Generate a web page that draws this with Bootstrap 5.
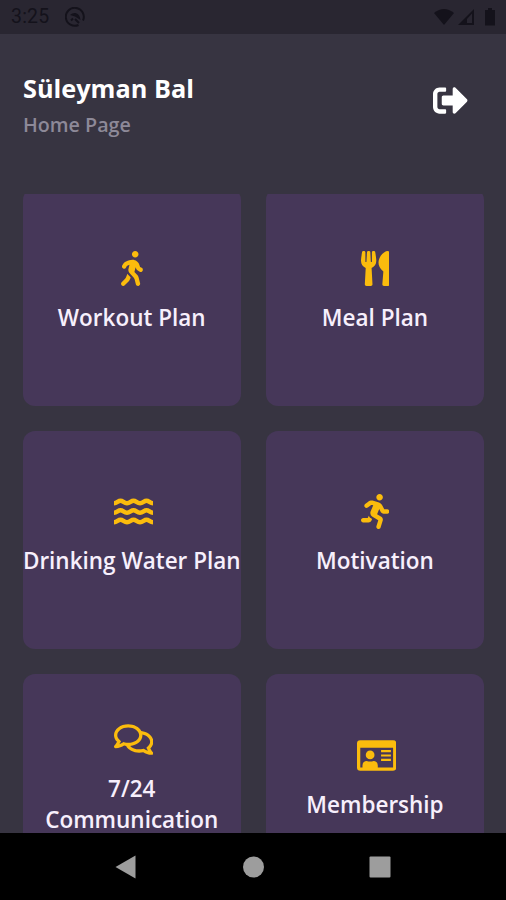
<!DOCTYPE html>
<html lang="en">
<head>
<meta charset="utf-8">
<meta name="viewport" content="width=device-width, initial-scale=1">
<title>Home Page</title>
<link href="https://cdn.jsdelivr.net/npm/bootstrap@5.3.0/dist/css/bootstrap.min.css" rel="stylesheet">
<style>
body{background:#373441;font-family:"Open Sans","Noto Sans",sans-serif;height:900px}
.status-bar{height:34px;background:#292631;color:#14121b;font:19.500px/36px Roboto,sans-serif;padding:0 10px 0 11px;letter-spacing:.2px}
.page-head{height:160px;padding:37px 38px 0 23px}
.user-name{font-size:25.300px;font-weight:700;line-height:34px;margin:0}
.page-name{font-size:19.700px;font-weight:600;line-height:30px;color:#8d8998;margin-top:5px}
.exit-btn{margin-top:12px;line-height:0}
.plan-scroll{height:639px}
.plan-grid{display:grid;grid-template-columns:217.500px 217.500px;grid-auto-rows:217.500px;gap:25.700px;padding-left:23px;margin-top:-6px}
.plan-card{background:#463759;border:0;border-radius:12px;color:#f7effc;padding-bottom:9px}
.plan-card svg{height:35px;fill:#fbbc0d;margin-bottom:16px}
.plan-card .wide-icon{margin-left:3px}
.plan-title{font-size:22.500px;font-weight:600;line-height:31px;white-space:nowrap}
.system-nav{height:67px;background:#000}
</style>
</head>
<body class="d-flex flex-column overflow-hidden">
<div class="status-bar d-flex justify-content-between flex-shrink-0">
  <div class="d-flex align-items-center">
    <span>3:25</span>
    <svg class="ms-3" width="20" height="20" viewBox="0 0 20 20" fill="none" stroke="#14121b" stroke-width="2"><path d="M13.500 18A9 9 0 1 1 18 13.500"/><path d="M5 8C9 4 15 6 15.500 13L10 9.500Z" fill="#14121b" stroke="none"/><path d="M6 13.500L8 11.500M10 12l4 4"/></svg>
  </div>
  <svg width="64" height="34" viewBox="0 0 64 34" fill="#14121b"><path d="M2 13Q12 5 22 13L12 25Z"/><path fill-rule="evenodd" d="M26 25L42 9V25ZM35 19V23H40V13.500Z"/><path d="M53 10h3V8h4v2h3v15.500H53Z"/></svg>
</div>
<header class="page-head d-flex justify-content-between flex-shrink-0">
  <div><h1 class="user-name text-white">Süleyman Bal</h1><div class="page-name">Home Page</div></div>
  <a href="#" class="exit-btn" aria-label="Sign out"><svg width="35" height="35" viewBox="0 0 512 512" fill="#fff"><path d="M497 273L329 441c-15 15-41 4.500-41-17v-96H152c-13.300 0-24-10.700-24-24v-96c0-13.300 10.700-24 24-24h136V88c0-21.400 25.900-32 41-17l168 168c9.300 9.400 9.300 24.600 0 34zM192 436v-40c0-6.600-5.400-12-12-12H96c-17.700 0-32-14.300-32-32V160c0-17.700 14.300-32 32-32h84c6.600 0 12-5.400 12-12V76c0-6.600-5.400-12-12-12H96c-53 0-96 43-96 96v192c0 53 43 96 96 96h84c6.600 0 12-5.400 12-12z"/></svg></a>
</header>
<main class="plan-scroll overflow-hidden flex-shrink-0 d-flex">
  <div class="plan-grid">
    <div class="card plan-card align-items-center justify-content-center text-center">
      <svg viewBox="0 0 320 512"><path d="M208 96c26.500 0 48-21.500 48-48S234.500 0 208 0s-48 21.500-48 48 21.500 48 48 48zm94.500 149.100l-23.300-11.800-9.700-29.400c-14.700-44.600-55.700-75.800-102.200-75.900-36-.1-55.900 10.100-93.300 25.200-21.600 8.700-39.300 25.200-49.700 46.200L17.600 213c-7.800 15.800-1.500 35 14.200 42.900 15.600 7.900 34.600 1.500 42.500-14.300L81 228c3.500-7 9.300-12.500 16.500-15.400l26.800-10.800-15.200 60.700c-5.200 20.800.4 42.900 14.900 58.800l59.900 65.400c7.200 7.900 12.300 17.400 14.900 27.700l18.300 73.300c4.300 17.100 21.700 27.600 38.800 23.300 17.100-4.300 27.600-21.700 23.300-38.800l-22.200-89c-2.600-10.300-7.700-19.900-14.900-27.700l-45.500-49.700 17.200-68.700 5.500 16.500c5.300 16.100 16.700 29.400 31.700 37l23.300 11.800c15.600 7.900 34.600 1.500 42.500-14.300 7.700-15.700 1.400-35.100-14.300-43zM73.600 385.800c-3.200 8.100-8 15.400-14.200 21.500l-50 50.100c-12.500 12.500-12.500 32.800 0 45.300s32.700 12.500 45.200 0l59.400-59.400c6.100-6.100 10.900-13.400 14.200-21.500l13.500-33.800c-55.300-60.300-38.700-41.800-47.400-53.700l-20.700 51.500z"/></svg>
      <div class="plan-title">Workout Plan</div>
    </div>
    <div class="card plan-card align-items-center justify-content-center text-center">
      <svg viewBox="0 0 416 512"><path d="M207.900 15.200c.8 4.700 16.100 94.500 16.100 128.800 0 52.300-27.800 89.600-68.900 104.600L168 486.700c.7 13.700-10.200 25.300-24 25.300H80c-13.700 0-24.700-11.500-24-25.300l12.900-238.100C27.700 233.600 0 196.200 0 144 0 109.600 15.300 19.900 16.100 15.200 19.300-5.100 61.400-5.400 64 16.300v141.200c1.300 3.400 15.100 3.200 16 0 1.400-25.300 7.900-139.200 8-141.800 3.300-20.800 44.700-20.800 47.900 0 .2 2.700 6.600 116.500 8 141.800.9 3.200 14.800 3.400 16 0V16.300c2.600-21.600 44.800-21.400 47.900-1.100zm119.200 285.700l-15 185.100c-1.200 14 9.900 26 23.900 26h56c13.300 0 24-10.700 24-24V24c0-13.200-10.700-24-24-24-82.500 0-221.400 178.500-64.900 300.900z"/></svg>
      <div class="plan-title">Meal Plan</div>
    </div>
    <div class="card plan-card align-items-center justify-content-center text-center">
      <svg class="wide-icon" viewBox="0 0 39 35"><g fill="none" stroke="#fbbc0d" stroke-width="4.600"><path id="wave" d="M0 9.200C3 9.200 4 6.800 6.500 6.800S10 9.200 13 9.200S17 6.800 19.500 6.800S23 9.200 26 9.200S30 6.800 32.500 6.800S36 9.200 39 9.200"/><use href="#wave" y="9.500"/><use href="#wave" y="19"/></g></svg>
      <div class="plan-title">Drinking Water Plan</div>
    </div>
    <div class="card plan-card align-items-center justify-content-center text-center">
      <svg viewBox="0 0 416 512"><path d="M272 96c26.510 0 48-21.490 48-48S298.510 0 272 0s-48 21.490-48 48 21.490 48 48 48zM113.690 317.470l-14.800 34.520H32c-17.670 0-32 14.330-32 32s14.330 32 32 32h77.450c19.250 0 36.580-11.440 44.110-29.090l8.790-20.520-10.670-6.300c-17.320-10.230-30.060-25.370-37.990-42.610zM384 223.990h-44.030l-26.060-53.250c-12.500-25.550-35.450-44.230-61.780-50.940l-71.080-21.140c-28.300-6.800-57.770-.55-80.840 17.140l-39.670 30.410c-14.030 10.750-16.690 30.830-5.940 44.860s30.840 16.660 44.860 5.910l39.690-30.410c7.670-5.890 17.440-8 25.270-6.140l14.700 4.370-37.460 87.390c-12.620 29.480-1.310 64.010 26.300 80.310l84.980 50.170-27.470 87.730c-5.280 16.860 4.110 34.820 20.970 40.090 3.190 1 6.410 1.480 9.580 1.480 13.610 0 26.230-8.770 30.520-22.450l31.640-101.060c5.910-20.770-2.890-43.080-21.640-54.390l-61.240-36.140 31.310-78.280 20.270 41.430c8 16.340 24.920 26.890 43.110 26.890H384c17.670 0 32-14.330 32-32s-14.330-31.990-32-31.990z"/></svg>
      <div class="plan-title">Motivation</div>
    </div>
    <div class="card plan-card align-items-center justify-content-center text-center">
      <svg class="wide-icon" viewBox="0 0 576 512"><path d="M532 386.200c27.500-27.100 44-61.100 44-98.200 0-80-76.500-146.100-176.200-157.900C368.300 72.500 294.300 32 208 32 93.100 32 0 103.600 0 192c0 37 16.500 71 44 98.200-15.300 30.700-37.300 54.500-37.700 54.900-6.300 6.700-8.100 16.500-4.400 25 3.600 8.500 12 14 21.200 14 53.500 0 96.700-20.200 125.200-38.800 9.200 2.100 18.700 3.700 28.400 4.900C208.100 407.600 281.800 448 368 448c20.800 0 40.800-2.400 59.800-6.800C456.300 459.700 499.400 480 553 480c9.200 0 17.500-5.500 21.200-14 3.600-8.500 1.900-18.300-4.400-25-.4-.3-22.500-24.100-37.800-54.800zm-392.800-92.300L122.100 305c-14.100 9.100-28.500 16.300-43.100 21.400 2.700-4.700 5.400-9.700 8-14.800l15.500-31.100L77.700 256C64.200 242.600 48 220.700 48 192c0-60.700 73.300-112 160-112s160 51.300 160 112-73.300 112-160 112c-16.500 0-33-1.900-49-5.600l-19.800-4.500zM498.300 352l-24.700 24.400 15.500 31.100c2.600 5.100 5.300 10.100 8 14.800-14.600-5.100-29-12.300-43.100-21.400l-17.100-11.100-19.900 4.600c-16 3.700-32.500 5.600-49 5.600-54 0-102.200-20.100-131.300-49.700C338 339.500 416 272.900 416 192c0-3.400-.4-6.700-.7-10C479.700 196.500 528 238.800 528 288c0 28.700-16.200 50.600-29.700 64z"/></svg>
      <div class="plan-title">7/24<br>Communication</div>
    </div>
    <div class="card plan-card align-items-center justify-content-center text-center">
      <svg class="wide-icon" viewBox="0 0 576 512"><path fill-rule="evenodd" d="M48 32H528Q576 32 576 80V432Q576 480 528 480H48Q0 480 0 432V80Q0 32 48 32ZM48 144V432H528V144Z"/><circle cx="192" cy="248" r="64"/><path d="M80 440V403Q80 342 141 336Q192 352 243 336Q304 342 304 403V440ZM352 176H496V208H352ZM352 240H496V272H352ZM352 304H496V336H352Z"/></svg>
      <div class="plan-title">Membership</div>
    </div>
  </div>
</main>
<nav class="system-nav d-flex flex-shrink-0 justify-content-center">
  <svg width="506" height="67" fill="#9d9d9d"><path d="M115.500 34L135.500 22.500V45.500Z"/><circle cx="253.500" cy="34" r="10.500"/><rect x="369.500" y="23.500" width="21" height="21" rx="1"/></svg>
</nav>
<script src="https://cdn.jsdelivr.net/npm/bootstrap@5.3.0/dist/js/bootstrap.bundle.min.js"></script>
</body>
</html>
